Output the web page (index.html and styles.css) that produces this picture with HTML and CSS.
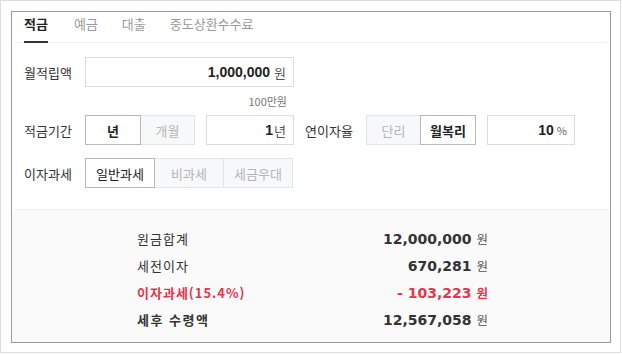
FILE: index.html
```html
<!DOCTYPE html>
<html lang="ko">
<head>
<meta charset="utf-8">
<title>적금 계산기</title>
<link rel="stylesheet" href="styles.css">
</head>
<body>
<div class="frame">
  <div class="calc">
    <ul class="tabs">
      <li class="tab active">적금</li>
      <li class="tab">예금</li>
      <li class="tab">대출</li>
      <li class="tab">중도상환수수료</li>
    </ul>
    <div class="form">
      <div class="row">
        <span class="label">월적립액</span>
        <div class="field wide"><b class="num">1,000,000</b><span class="unit">원</span></div>
      </div>
      <div class="hint">100만원</div>
      <div class="row">
        <span class="label">적금기간</span>
        <div class="seg">
          <span class="seg-btn w56 on strong">년</span>
          <span class="seg-btn w55">개월</span>
        </div>
        <div class="field small"><b class="num">1</b><span class="unit tight">년</span></div>
        <span class="label label-mid">연이자율</span>
        <div class="seg">
          <span class="seg-btn w55">단리</span>
          <span class="seg-btn w56 on strong">월복리</span>
        </div>
        <div class="field small"><b class="num">10</b><span class="unit pct">%</span></div>
      </div>
      <div class="row row-gap">
        <span class="label">이자과세</span>
        <div class="seg">
          <span class="seg-btn w70 on">일반과세</span>
          <span class="seg-btn w70">비과세</span>
          <span class="seg-btn w70">세금우대</span>
        </div>
      </div>
    </div>
    <div class="results">
      <div class="res-row">
        <span class="res-label">원금합계</span>
        <span class="res-val"><b class="rnum">12,000,000</b><span class="won">원</span></span>
      </div>
      <div class="res-row">
        <span class="res-label">세전이자</span>
        <span class="res-val"><b class="rnum">670,281</b><span class="won">원</span></span>
      </div>
      <div class="res-row tax">
        <span class="res-label">이자과세(15.4%)</span>
        <span class="res-val"><b class="rnum">- 103,223</b><span class="won">원</span></span>
      </div>
      <div class="res-row total">
        <span class="res-label">세후 수령액</span>
        <span class="res-val"><b class="rnum">12,567,058</b><span class="won">원</span></span>
      </div>
    </div>
  </div>
</div>
</body>
</html>
```

FILE: styles.css
```css
html, body {
  margin: 0;
  padding: 0;
  background: #fff;
}
body {
  font-family: "Noto Sans CJK KR", "Noto Sans", sans-serif;
  color: #333;
}
.frame {
  width: 621px;
  height: 353px;
  box-sizing: border-box;
  border: 1px solid #dcdcdc;
  padding: 10px 9px 9px 10px;
}
.calc {
  height: 332px;
  box-sizing: border-box;
  border: 1px solid #9c9c9c;
  background: #fff;
  display: flex;
  flex-direction: column;
}
.tabs {
  list-style: none;
  margin: 0 3px;
  padding: 0 0 0 9px;
  height: 30px;
  display: flex;
  gap: 24px;
  border-bottom: 1px solid #efefef;
}
.tab {
  position: relative;
  font-size: 13px;
  line-height: 24px;
  height: 30px;
  color: #9a9a9a;
}
.tab.active {
  color: #222;
  font-weight: bold;
  margin-right: 2px;
}
.tab.active::after {
  content: "";
  position: absolute;
  left: 0;
  right: 0;
  bottom: -1px;
  height: 2px;
  background: #333;
}
.form {
  margin: 0 3px;
  padding: 14px 0 21px 9px;
  border-bottom: 1px solid #efefef;
}
.row {
  display: flex;
  align-items: center;
  height: 30px;
}
.row-gap {
  margin-top: 13px;
}
.label {
  width: 61px;
  font-size: 13px;
  color: #333;
  flex: none;
}
.label-mid {
  margin-left: 11px;
}
.field {
  height: 30px;
  box-sizing: border-box;
  border: 1px solid #dcdcdc;
  background: #fff;
  display: flex;
  justify-content: flex-end;
  align-items: center;
  padding-right: 7px;
  flex: none;
}
.field.wide {
  width: 209px;
}
.field.small {
  width: 88px;
  margin-left: 11px;
}
.num {
  font-family: "Liberation Sans", Arial, sans-serif;
  font-weight: bold;
  font-size: 14px;
  color: #222;
}
.unit {
  font-size: 13px;
  color: #555;
  margin-left: 4px;
}
.unit.tight {
  margin-left: 1px;
}
.unit.pct {
  font-size: 11px;
  margin-left: 3px;
  color: #666;
}
.hint {
  width: 270px;
  box-sizing: border-box;
  text-align: right;
  padding-right: 7px;
  font-size: 11px;
  line-height: 16px;
  color: #777;
  margin: 6px 0;
}
.seg {
  display: flex;
  flex: none;
}
.seg-btn {
  height: 30px;
  box-sizing: border-box;
  border: 1px solid #e3e4e6;
  background: #f7f8fa;
  color: #b5b5b5;
  font-size: 13px;
  display: flex;
  align-items: center;
  justify-content: center;
  position: relative;
}
.seg-btn + .seg-btn {
  margin-left: -1px;
}
.seg-btn.on {
  background: #fff;
  border-color: #b9b9b9;
  color: #222;
  z-index: 1;
}
.seg-btn.strong {
  font-weight: bold;
}
.w55 { width: 55px; }
.w56 { width: 56px; }
.w70 { width: 70px; }
.results {
  flex: 1;
  background: #fafafa;
  padding: 15px 0 0 125px;
}
.res-row {
  width: 351px;
  height: 27px;
  display: flex;
  justify-content: space-between;
  align-items: center;
}
.res-label {
  font-size: 13px;
  letter-spacing: 1px;
  color: #333;
}
.res-val {
  display: flex;
  align-items: baseline;
}
.rnum {
  font-family: "DejaVu Sans", Verdana, sans-serif;
  font-weight: bold;
  font-size: 14px;
  color: #333;
}
.won {
  font-size: 12.5px;
  color: #555;
  margin-left: 5px;
}
.tax .res-label,
.tax .rnum,
.tax .won {
  color: #e8344c;
  font-weight: bold;
}
.total .res-label {
  font-weight: bold;
  letter-spacing: 1.5px;
}
```
